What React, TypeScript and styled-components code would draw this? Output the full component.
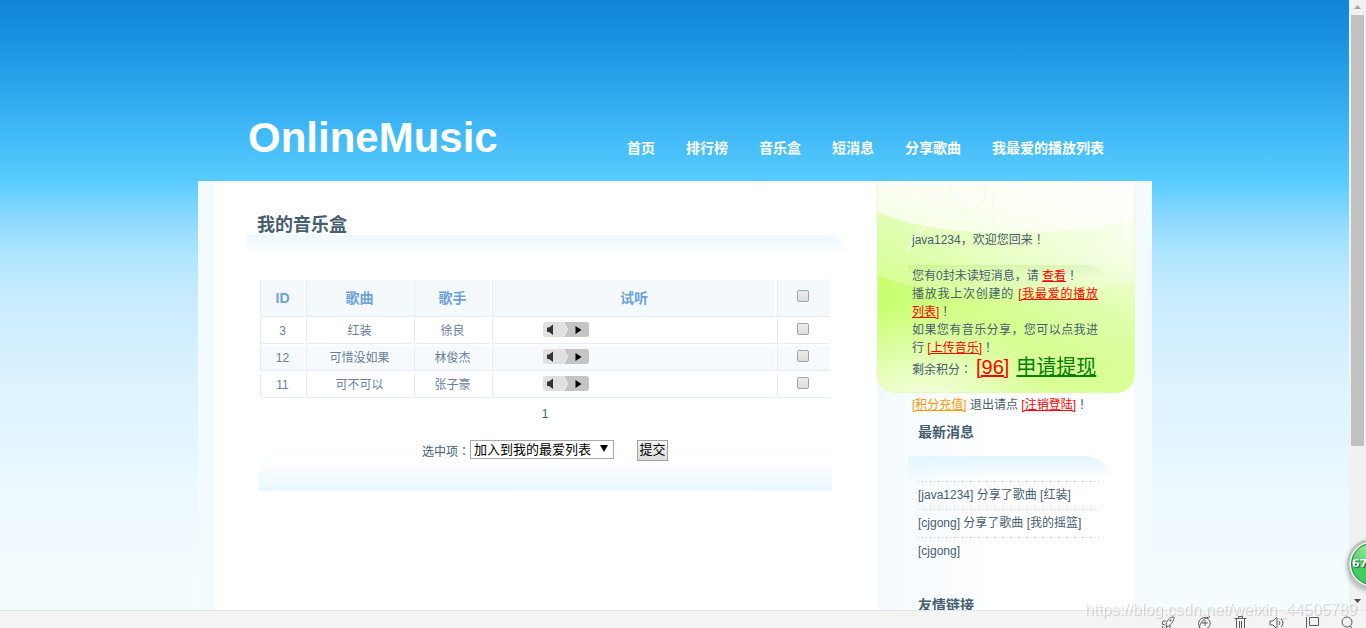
import React from "react";
import styled, { createGlobalStyle } from "styled-components";

const GlobalStyle = createGlobalStyle`
  * { box-sizing: border-box; }
  body {
    margin: 0;
    overflow: hidden;
    font-family: "Liberation Sans", "Noto Sans CJK SC", sans-serif;
    font-size: 12px;
    color: #465e6e;
  }
  h1, h2, h3, p, ul { margin: 0; padding: 0; }
  ul { list-style: none; }
`;

const Browser = styled.div`
  display: flex;
  flex-direction: column;
  height: 100vh;
`;

const View = styled.div`
  display: flex;
  flex: 1;
  min-height: 0;
`;

const Page = styled.div`
  flex: 1;
  padding-left: 1px;
  overflow: hidden;
  background: linear-gradient(
    #0f85d8 0,
    #1f9be6 60px,
    #3ab4f5 120px,
    #58ccff 181px,
    #93daff 224px,
    #b2e7ff 260px,
    #c9ebff 300px,
    #d2effe 340px,
    #dcf3ff 380px,
    #e2f5ff 440px,
    #ebf9ff 480px,
    #f2faff 540px,
    #f4fcff 580px
  );
`;

const Wrap = styled.div`
  width: 954px;
  margin: 0 auto;
`;

const Header = styled.header`
  display: flex;
  align-items: flex-end;
  justify-content: space-between;
  height: 181px;
  padding: 0 48px 19px 50px;
`;

const Logo = styled.h1`
  font-size: 42px;
  line-height: 48px;
  color: #fff;
`;

const Nav = styled.nav`
  display: flex;
  gap: 31px;
  padding-bottom: 4px;
`;

const NavLink = styled.a`
  font-size: 14px;
  line-height: 20px;
  font-weight: bold;
  color: #fff;
  text-decoration: none;
`;

const Body = styled.div`
  display: flex;
  min-height: 640px;
  padding: 0 17px;
  background: #f4fbff;
`;

const Main = styled.main`
  flex: 1;
  padding: 30px 28px 0 31px;
  background: #fff;
`;

const Title = styled.h2`
  height: 24px;
  padding-left: 11px;
  font-size: 18px;
  line-height: 28px;
`;

const CurveBar = styled.div<{ $tint: string; $height: number }>`
  height: ${(p) => p.$height}px;
  border-top-right-radius: 28px 22px;
  background: linear-gradient(${(p) => p.$tint}, transparent);
`;

const Panel = styled.section`
  width: 574px;
  margin: 23px 0 0 12px;
  padding-bottom: 30px;
  background: linear-gradient(#fff, #e9f7ff) bottom / 100% 31px no-repeat;
`;

const SongTable = styled.table`
  width: 574px;
  table-layout: fixed;
  border-spacing: 2px;
  text-align: center;
  font-size: 12px;
  color: #6a8098;
`;

const HeadCell = styled.th<{ $width: number }>`
  width: ${(p) => p.$width}px;
  height: 37px;
  padding: 0;
  border: solid #e1eef7;
  border-width: 0 0 1px 1px;
  background: #f4f9fe;
  font-size: 14px;
  line-height: 20px;
  color: #6ca3d6;
`;

const Row = styled.tr`
  &:nth-child(even) { background: #f6faff; }
`;

const Cell = styled.td`
  height: 25px;
  padding: 0;
  border: solid #e1eef7;
  border-width: 0 0 1px 1px;
  line-height: 20px;
`;

const Check = styled.input`
  appearance: none;
  display: block;
  width: 12px;
  height: 12px;
  margin: 0 0 4px 19px;
  border: 1px solid #a3a3a3;
  border-radius: 2px;
  background: linear-gradient(#ededed, #dcdcdc);
`;

const PlayerButton = styled.button`
  display: block;
  width: 46px;
  height: 15px;
  margin: 0 0 4px 50px;
  padding: 0;
  border: 0;
  background: none;
  svg { display: block; }
`;

const Pager = styled.p`
  padding-top: 5px;
  line-height: 18px;
  text-align: center;
`;

const ActionForm = styled.form`
  display: flex;
  align-items: center;
  justify-content: center;
  height: 22px;
  margin-top: 16px;
`;

const Picker = styled.div`
  position: relative;
  margin: 0 23px 2px 0;
`;

const Select = styled.select`
  appearance: none;
  display: block;
  width: 144px;
  height: 19px;
  padding: 0 18px 0 3px;
  border: 1px solid #a9a9a9;
  border-radius: 0;
  background: #fff;
  font: 13px/17px "Liberation Sans", "Noto Sans CJK SC", sans-serif;
  color: #000;
`;

const Arrow = styled.svg`
  position: absolute;
  top: 5px;
  right: 6px;
  pointer-events: none;
`;

const Submit = styled.button`
  width: 31px;
  height: 21px;
  padding: 0;
  border: 1px solid #a0a0a0;
  background: linear-gradient(#f4f4f4, #dcdcdc);
  font: 13px/18px "Liberation Sans", "Noto Sans CJK SC", sans-serif;
  color: #000;
`;

const Sidebar = styled.aside`
  position: relative;
  width: 258px;
  background: linear-gradient(90deg, #f3faff, #fff 45%);
`;

const CardArt = styled.svg`
  position: absolute;
  top: 0;
  left: 0;
`;

const SideContent = styled.div`
  position: relative;
  padding: 50px 24px 0 31px;
`;

const Welcome = styled.p`
  height: 34px;
  padding-left: 4px;
  line-height: 18px;
`;

const AccountBox = styled.div`
  padding: 2px 13px 8px 4px;
  border-top-right-radius: 28px 22px;
  background: linear-gradient(rgba(110, 180, 60, 0.14), transparent 12px);
  line-height: 18px;
  text-align: justify;
`;

const Balance = styled.p`
  display: flex;
  align-items: baseline;
  gap: 7px;
  line-height: 20px;
  white-space: nowrap;
`;

const BalanceLabel = styled.span`
  width: 57px;
`;

const Link = styled.a<{ $color?: string; $large?: boolean }>`
  font-size: ${(p) => (p.$large ? 20 : 12)}px;
  color: ${(p) => p.$color || "#f00"};
`;

const Mark = styled.span`
  font-family: "Noto Sans CJK JP", sans-serif;
  line-height: 12px;
`;

const Logout = styled.p`
  padding-top: 16px;
`;

const SideTitle = styled.h3`
  height: 34px;
  padding-left: 10px;
  font-size: 14px;
  line-height: 20px;
`;

const News = styled.ul`
  height: 114px;
  padding: 0 10px;
`;

const NewsItem = styled.li`
  height: 28px;
  line-height: 29px;
  background: linear-gradient(90deg, #b9cfd8 1px, transparent 1px) 0 0 / 4px 1px repeat-x;
`;

const ScrollBar = styled.div`
  display: flex;
  flex-direction: column;
  justify-content: space-between;
  align-items: center;
  width: 17px;
  padding: 5px 0 7px;
  background: #f1f1f1;
`;

const Thumb = styled.div`
  width: 13px;
  height: 72%;
  margin: 6px 0 auto;
  background: #c1c1c1;
`;

const StatusBar = styled.footer`
  display: flex;
  align-items: flex-start;
  justify-content: flex-end;
  gap: 20px;
  height: 18px;
  padding: 5px 9px 0;
  overflow: hidden;
  border-top: 1px solid #e4e4e4;
  background: #f4f4f4;
`;

const Watermark = styled.div`
  position: fixed;
  right: 9px;
  bottom: 8px;
  font-size: 16px;
  line-height: 20px;
  color: rgba(255, 255, 255, 0.6);
  text-shadow: 1px 1px 1px rgba(0, 0, 0, 0.18);
`;

const Ball = styled.div`
  position: fixed;
  right: -31px;
  bottom: 39px;
  width: 50px;
  height: 50px;
  padding-left: 3px;
  border: 2px solid #bdbdbd;
  border-radius: 50%;
  background: radial-gradient(circle at 40% 12%, #9be89b, #4acb63 45%, #3fc75a);
  box-shadow: inset 0 0 0 2px #eee, inset 0 0 0 3px #218a4a, 0 2px 5px rgba(0, 0, 0, 0.3);
  font: bold 11px/46px "DejaVu Sans", sans-serif;
  color: #fff;
  text-shadow: 1px 1px 1px #245c30;
`;

const songs = [
  { id: 3, name: "红装", singer: "徐良" },
  { id: 12, name: "可惜没如果", singer: "林俊杰" },
  { id: 11, name: "可不可以", singer: "张子豪" },
];

const links = ["首页", "排行榜", "音乐盒", "短消息", "分享歌曲", "我最爱的播放列表"];
const news = ["[java1234] 分享了歌曲 [红装]", "[cjgong] 分享了歌曲 [我的摇篮]", "[cjgong]"];

const Player = () => (
  <PlayerButton type="button" aria-label="试听">
    <svg width="46" height="15" viewBox="0 0 46 15">
      <rect width="46" height="15" rx="3" fill="#e0e0e0" />
      <path d="M21 0H43Q46 0 46 3V12Q46 15 43 15H21L25 7.500Z" fill="#c4c4c4" />
      <path d="M20.500 0L24.500 7.500L20.500 15" fill="none" stroke="#f0f0f0" />
      <path d="M4 5.500H6L10 2.500V13L6 10H4Z" fill="#333" />
      <path d="M32.500 4L38.500 8L32.500 12Z" fill="#000" />
    </svg>
  </PlayerButton>
);

const GreenCard = () => (
  <CardArt width="258" height="212" viewBox="0 0 258 212" aria-hidden="true">
    <defs>
      <clipPath id="card"><path d="M0 8Q0 0 8 0H250Q258 0 258 8V190Q258 212 236 212H22Q0 212 0 190Z" /></clipPath>
      <linearGradient id="base" x1="0" x2="1" y1="0.600" y2="0.300">
        <stop offset="0" stopColor="#c6ff6a" />
        <stop offset="0.550" stopColor="#e0ffae" />
        <stop offset="1" stopColor="#f4ffdf" />
      </linearGradient>
      <linearGradient id="low" x1="0" x2="0" y1="0" y2="1">
        <stop offset="0" stopColor="#c5fb6c" stopOpacity="0" />
        <stop offset="1" stopColor="#d9ff96" />
      </linearGradient>
      <radialGradient id="shine" cx="0.180" cy="1.080" r="0.500">
        <stop offset="0" stopColor="#f6ffe6" />
        <stop offset="1" stopColor="#f2ffd9" stopOpacity="0" />
      </radialGradient>
      <linearGradient id="mid" x1="0" x2="0" y1="0" y2="1">
        <stop offset="0" stopColor="#fff" stopOpacity="0.550" />
        <stop offset="1" stopColor="#fff" stopOpacity="0.200" />
      </linearGradient>
      <linearGradient id="top" x1="0" x2="1" y1="1" y2="0">
        <stop offset="0" stopColor="#f6ffe4" />
        <stop offset="0.500" stopColor="#fdfff8" />
        <stop offset="1" stopColor="#fff" />
      </linearGradient>
    </defs>
    <g clipPath="url(#card)">
      <rect width="258" height="212" fill="url(#base)" />
      <rect y="80" width="258" height="132" fill="url(#low)" />
      <path d="M0 0H258V100Q220 112 140 112Q50 116 0 94Z" fill="url(#mid)" />
      <rect width="258" height="212" fill="url(#shine)" />
      <path d="M0 0H258V38Q210 52 130 52Q50 52 0 31Z" fill="url(#top)" opacity="0.900" />
      <g fill="none" stroke="#fff" strokeWidth="2" opacity="0.600">
        <circle cx="26" cy="-4" r="19" />
        <path d="M30 72Q44 38 78 34" />
      </g>
      <g fill="none" stroke="#f3ffe0" strokeWidth="2" opacity="0.700">
        <circle cx="90" cy="12" r="18" />
        <path d="M120 50Q108 24 124 0" />
      </g>
      <path d="M0 0V190Q0 212 22 212H236Q258 212 258 190V0" fill="none" stroke="#dcffa8" strokeWidth="2" opacity="0.600" />
    </g>
  </CardArt>
);

const iconPaths = [
  "M5 8C7 3 9 1 13 1C13 5 11 8 6 11ZM5 5H2L1 8L4 9M9 9V12L6 13L5 10M2 10L1 13L4 12M9 4h1v1h-1z",
  "M3 12C-1 6 4 0 10 2C15 5 14 12 8 13M13 1C8 1 3 6 2 13M5 7H11M8 4V10",
  "M1.500 2.500H13.500M5.500 2.500V0.500H9.500V2.500M3.500 2.500V13.500H11.500V2.500M6.500 5V13M8.500 5V13",
  "M1 5H4L8 1V13L4 9H1ZM10 5Q12 7 10 9M12 3Q16 7 12 11",
  "M4.500 1.500H13.500V9.500H4.500ZM1.500 1V13",
  "M6 1A5 5 0 1 0 6 11A5 5 0 1 0 6 1M9 10L13 14",
];

export default function App() {
  return (
    <>
      <GlobalStyle />
      <Browser>
        <View>
          <Page>
            <Wrap>
              <Header>
                <Logo>OnlineMusic</Logo>
                <Nav>
                  {links.map((name) => <NavLink href="#" key={name}>{name}</NavLink>)}
                </Nav>
              </Header>
              <Body>
                <Main>
                  <Title>我的音乐盒</Title>
                  <CurveBar $tint="#edf8ff" $height={20} />
                  <Panel>
                    <SongTable>
                      <thead>
                        <tr>
                          <HeadCell $width={44}>ID</HeadCell>
                          <HeadCell $width={106}>歌曲</HeadCell>
                          <HeadCell $width={76}>歌手</HeadCell>
                          <HeadCell $width={283}>试听</HeadCell>
                          <HeadCell $width={53}><Check type="checkbox" aria-label="全选" /></HeadCell>
                        </tr>
                      </thead>
                      <tbody>
                        {songs.map((song) => (
                          <Row key={song.id}>
                            <Cell>{song.id}</Cell>
                            <Cell>{song.name}</Cell>
                            <Cell>{song.singer}</Cell>
                            <Cell><Player /></Cell>
                            <Cell><Check type="checkbox" aria-label={song.name} /></Cell>
                          </Row>
                        ))}
                      </tbody>
                    </SongTable>
                    <Pager>1</Pager>
                    <ActionForm onSubmit={(e) => e.preventDefault()}>
                      <label htmlFor="action">选中项<Mark>：</Mark></label>
                      <Picker>
                        <Select id="action"><option>加入到我的最爱列表</option></Select>
                        <Arrow width="8" height="7"><path d="M0 0H8L4 7Z" fill="#000" /></Arrow>
                      </Picker>
                      <Submit type="submit">提交</Submit>
                    </ActionForm>
                  </Panel>
                </Main>
                <Sidebar>
                  <GreenCard />
                  <SideContent>
                    <Welcome>java1234，欢迎您回来<Mark>！</Mark></Welcome>
                    <AccountBox>
                      <p>您有0封未读短消息，请 <Link href="#">查看</Link><Mark>！</Mark></p>
                      <p>播放我上次创建的 <Link href="#">[我最爱的播放列表]</Link><Mark>！</Mark></p>
                      <p>如果您有音乐分享，您可以点我进行 <Link href="#">[上传音乐]</Link><Mark>！</Mark></p>
                      <Balance>
                        <BalanceLabel>剩余积分<Mark>：</Mark></BalanceLabel>
                        <Link href="#" $large>[96]</Link>
                        <Link href="#" $large $color="#008000">申请提现</Link>
                      </Balance>
                      <Logout>
                        <Link href="#" $color="#ff9900">[积分充值]</Link> 退出请点 <Link href="#">[注销登陆]</Link><Mark>！</Mark>
                      </Logout>
                    </AccountBox>
                    <SideTitle>最新消息</SideTitle>
                    <CurveBar $tint="#e3f6ff" $height={25} />
                    <News>
                      {news.map((item) => <NewsItem key={item}>{item}</NewsItem>)}
                    </News>
                    <SideTitle>友情链接</SideTitle>
                  </SideContent>
                </Sidebar>
              </Body>
            </Wrap>
          </Page>
          <ScrollBar>
            <svg width="7" height="4"><path d="M0 4L3.500 0L7 4Z" fill="#a3a3a3" /></svg>
            <Thumb />
            <svg width="7" height="4"><path d="M0 0H7L3.500 4Z" fill="#505050" /></svg>
          </ScrollBar>
        </View>
        <StatusBar>
          {iconPaths.map((d) => (
            <svg key={d} width="16" height="15" viewBox="0 0 16 15" fill="none" stroke="#5c5c5c"><path d={d} /></svg>
          ))}
        </StatusBar>
      </Browser>
      <Ball>67</Ball>
      <Watermark>https://blog.csdn.net/weixin_44505789</Watermark>
    </>
  );
}
